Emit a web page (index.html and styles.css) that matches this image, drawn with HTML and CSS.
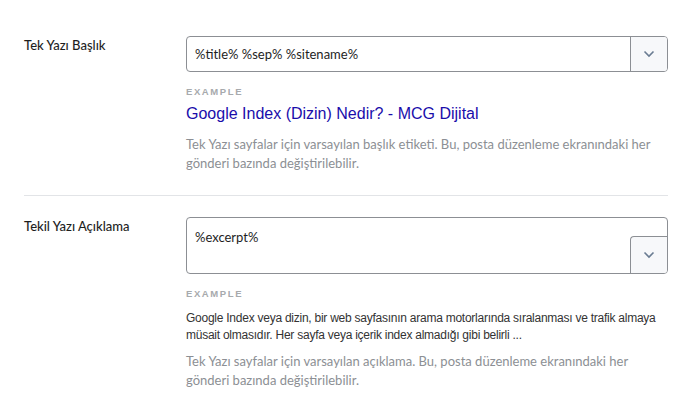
FILE: index.html
```html
<!DOCTYPE html>
<html lang="tr">
<head>
    <meta charset="UTF-8">
    <title>Tek Yazı Ayarları</title>
    <link rel="stylesheet" href="styles.css">
</head>
<body>

<div class="settings">

    <!-- Title row -->
    <div class="setting-row">
        <div class="setting-label">Tek Yazı Başlık</div>
        <div class="setting-field">
            <div class="tag-input">
                <div class="tag-text">%title% %sep% %sitename%</div>
                <button class="tag-toggle">
                    <svg width="12" height="8" viewBox="0 0 12 8"><path d="M1.5 1.5 6 6l4.5-4.5" fill="none" stroke="#6a7c92" stroke-width="1.6"/></svg>
                </button>
            </div>
            <div class="example-label">EXAMPLE</div>
            <div class="example-title">Google Index (Dizin) Nedir? - MCG Dijital</div>
            <p class="setting-desc">Tek Yazı sayfalar için varsayılan başlık etiketi. Bu, posta düzenleme ekranındaki her gönderi bazında değiştirilebilir.</p>
        </div>
    </div>

    <!-- Description row -->
    <div class="setting-row">
        <div class="setting-label">Tekil Yazı Açıklama</div>
        <div class="setting-field">
            <div class="tag-input tag-area">
                <div class="tag-text">%excerpt%</div>
                <button class="tag-toggle">
                    <svg width="12" height="8" viewBox="0 0 12 8"><path d="M1.5 1.5 6 6l4.5-4.5" fill="none" stroke="#6a7c92" stroke-width="1.6"/></svg>
                </button>
            </div>
            <div class="example-label">EXAMPLE</div>
            <div class="example-text">Google Index veya dizin, bir web sayfasının arama motorlarında sıralanması ve trafik almaya müsait olmasıdır. Her sayfa veya içerik index almadığı gibi belirli ...</div>
            <p class="setting-desc">Tek Yazı sayfalar için varsayılan açıklama. Bu, posta düzenleme ekranındaki her gönderi bazında değiştirilebilir.</p>
        </div>
    </div>

</div>

</body>
</html>
```

FILE: styles.css
```css
body {
    margin: 0;
    background-color: #fff;
    font-family: Lato, "Noto Sans", sans-serif;
    color: #1e1e1e;
}
.settings {
    width: 644px;
    margin-left: 24px;
}
.setting-row {
    display: grid;
    grid-template-columns: 162px 482px;
    padding: 36px 0 22px;
}
.setting-row + .setting-row {
    border-top: 1px solid #e2e4e7;
    padding-top: 21px;
}
.setting-label {
    font-size: 13px;
    font-weight: 500;
    line-height: 18px;
}
.tag-input {
    display: flex;
    height: 36px;
    border: 1px solid #8c8f94;
    border-radius: 4px;
    box-sizing: border-box;
    overflow: hidden;
}
.tag-text {
    flex: 1;
    font-size: 13px;
    line-height: 34px;
    padding-left: 8px;
}
.tag-toggle {
    width: 37px;
    border: none;
    border-left: 1px solid #8c8f94;
    background-color: #f7f8fa;
    padding: 0;
    display: flex;
    align-items: center;
    justify-content: center;
}
.tag-area {
    height: 57px;
    align-items: flex-end;
}
.tag-area .tag-text {
    align-self: flex-start;
    padding-top: 9px;
    line-height: 20px;
}
.tag-area .tag-toggle {
    height: 37px;
    border-top: 1px solid #8c8f94;
    border-top-left-radius: 4px;
}
.example-label {
    margin-top: 14px;
    font-family: "Liberation Sans", Arial, sans-serif;
    font-size: 9.5px;
    font-weight: bold;
    letter-spacing: 1.6px;
    color: #a7aaad;
}
.example-title {
    margin-top: 6px;
    font-family: "Liberation Sans", Arial, sans-serif;
    font-size: 16px;
    line-height: 22px;
    color: #1a0dab;
}
.example-text {
    margin-top: 11px;
    font-family: "Liberation Sans", Arial, sans-serif;
    font-size: 12px;
    letter-spacing: -0.25px;
    line-height: 17px;
    color: #333;
}
.setting-desc {
    margin: 10px 0 0;
    font-size: 13px;
    line-height: 19px;
    color: #8c8f94;
}
.example-text + .setting-desc {
    margin-top: 8px;
}
```
